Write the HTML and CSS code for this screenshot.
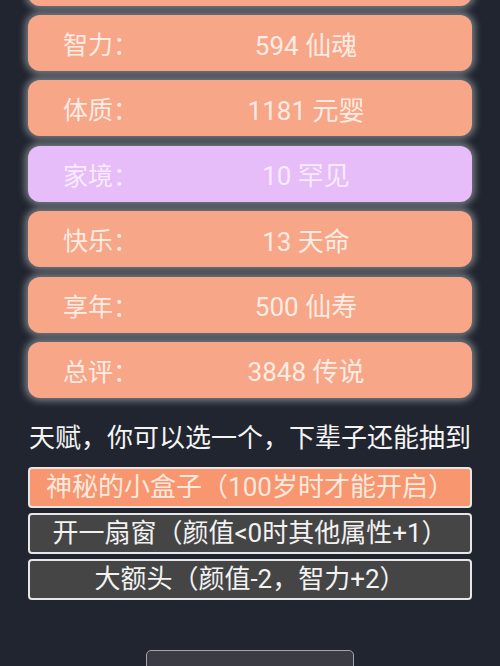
FILE: index.html
```html
<!DOCTYPE html>
<html lang="zh-CN">
<head>
<meta charset="utf-8">
<link rel="stylesheet" href="styles.css">
</head>
<body>
<div class="page">
  <div class="stats">
    <div class="stat orange"></div>
    <div class="stat orange"><span class="label">智力：</span><span class="value">594 仙魂</span></div>
    <div class="stat orange"><span class="label">体质：</span><span class="value">1181 元婴</span></div>
    <div class="stat purple"><span class="label">家境：</span><span class="value">10 罕见</span></div>
    <div class="stat orange"><span class="label">快乐：</span><span class="value">13 天命</span></div>
    <div class="stat orange"><span class="label">享年：</span><span class="value">500 仙寿</span></div>
    <div class="stat orange"><span class="label">总评：</span><span class="value">3848 传说</span></div>
  </div>
  <div class="title">天赋，你可以选一个，下辈子还能抽到</div>
  <div class="talents">
    <div class="talent selected">神秘的小盒子（100岁时才能开启）</div>
    <div class="talent">开一扇窗（颜值&lt;0时其他属性+1）</div>
    <div class="talent">大额头（颜值-2，智力+2）</div>
  </div>
  <div class="bottom">
    <div class="again"></div>
  </div>
</div>
</body>
</html>
```
FILE: styles.css
```css
html, body {
  margin: 0;
  padding: 0;
  background: #21252f;
  overflow: hidden;
}
body {
  width: 500px;
  height: 666px;
  font-family: "Roboto", "Noto Sans CJK SC", sans-serif;
  color: #fff;
}
.page {
  padding: 0 28px;
}
.stats {
  display: flex;
  flex-direction: column;
  gap: 9.4px;
  margin-top: -50.4px;
}
.stat {
  height: 56px;
  border-radius: 12px;
  display: grid;
  grid-template-columns: 112px 1fr;
  align-items: center;
  font-size: 25px;
  color: rgba(255, 244, 238, 0.92);
  box-shadow: 0 0 7px 3px rgba(190, 196, 202, 0.55);
}
.stat.orange { background: #f7a687; }
.stat.purple { background: #e6bdf8; color: rgba(250, 240, 255, 0.92); }
.label {
  padding-left: 35px;
  white-space: nowrap;
}
.value {
  text-align: center;
  white-space: nowrap;
  font-size: 26px;
}
.title {
  margin-top: 20px;
  height: 40px;
  line-height: 40px;
  font-size: 26px;
  text-align: center;
  white-space: nowrap;
  color: #f4f4f4;
}
.talents {
  margin-top: 9px;
  display: flex;
  flex-direction: column;
  gap: 5px;
}
.talent {
  height: 37px;
  border: 2px solid #e6e6e6;
  border-radius: 4px;
  background: #454545;
  font-size: 26px;
  line-height: 37px;
  text-align: center;
  white-space: nowrap;
  color: #f2f2f2;
}
.talent.selected {
  background: #f7966f;
  color: #fde9df;
}
.bottom {
  display: flex;
  justify-content: center;
  margin-top: 50px;
}
.again {
  width: 206px;
  height: 50px;
  border: 1px solid #a2a4ac;
  border-radius: 5px;
  background: #3a3b43;
}
```
